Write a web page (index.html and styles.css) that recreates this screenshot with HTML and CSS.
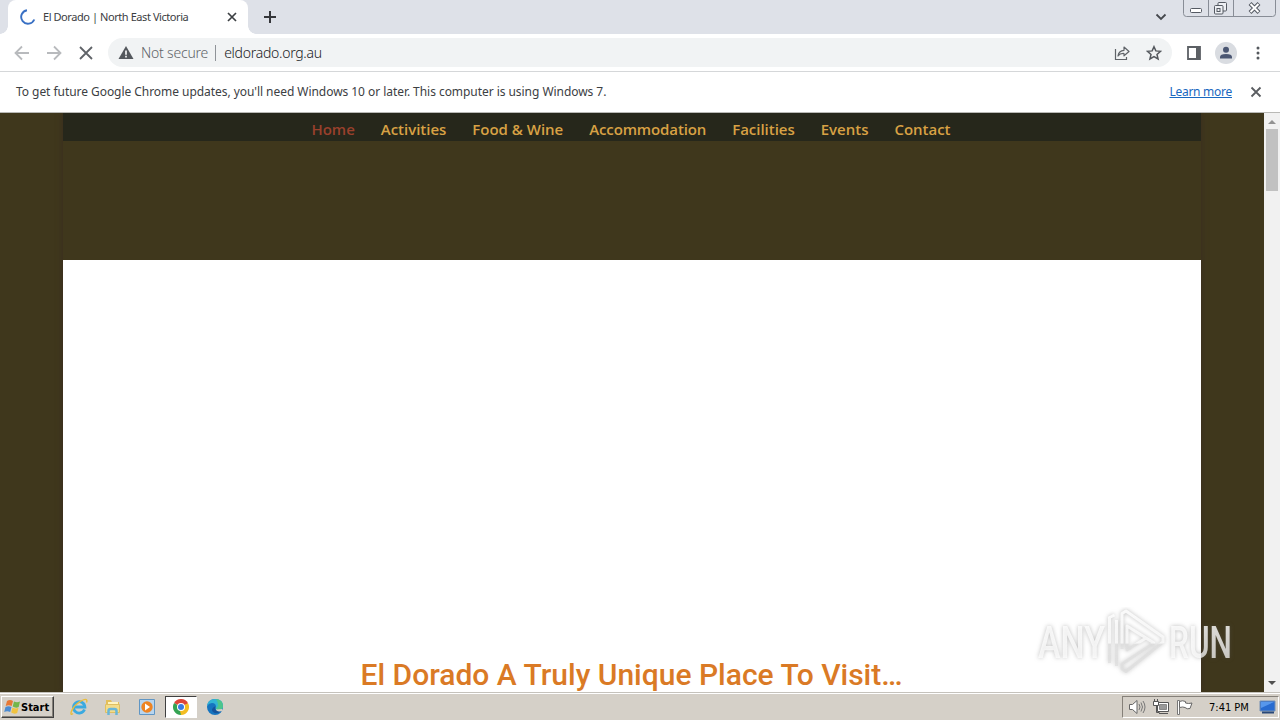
FILE: index.html
```html
<!DOCTYPE html>
<html lang="en">
<head>
<meta charset="utf-8">
<title>El Dorado | North East Victoria</title>
<link rel="stylesheet" href="styles.css">
</head>
<body>
<div class="screen">
  <header class="tabstrip">
    <div class="tab">
      <svg class="spinner" width="16" height="16" viewBox="0 0 16 16"><path d="M7 1.2A6.8 6.8 0 1 0 14.3 10.5" fill="none" stroke="#3970c4" stroke-width="1.9"/></svg>
      <span class="tab-title">El Dorado | North East Victoria</span>
      <svg class="tab-close" width="10" height="10" viewBox="0 0 10 10"><path d="M1 1l8 8M9 1l-8 8" stroke="#3c4043" stroke-width="1.7"/></svg>
    </div>
    <svg class="new-tab" width="12" height="12" viewBox="0 0 12 12"><path d="M6 0v12M0 6h12" stroke="#35363a" stroke-width="2"/></svg>
    <svg class="tab-search" width="12" height="8" viewBox="0 0 12 8"><path d="M1.5 1.5L6 6l4.500-4.500" fill="none" stroke="#45484d" stroke-width="1.8"/></svg>
    <svg class="window-controls" width="94" height="18" viewBox="0 0 94 18">
      <path d="M.5 0v13.500q0 3 3 3h86q3 0 3-3V0M25.500 0v16.500M50.500 0v16.500" fill="none" stroke="#888d96"/>
      <rect x="7.500" y="8.500" width="11" height="4" rx="1" fill="#fff" stroke="#555a63"/>
      <g fill="#eef0f4" stroke="#555a63"><rect x="35" y="2.500" width="8.500" height="8.500" rx="1"/><rect x="31.500" y="5.500" width="8.500" height="8.500" rx="1"/><rect x="34" y="8.500" width="3" height="3"/></g>
      <path d="M67 3.500l9 9M76 3.500l-9 9" stroke="#555a63" stroke-width="4"/><path d="M67.500 4l8 8M75.500 4l-8 8" stroke="#fff" stroke-width="2"/>
    </svg>
  </header>

  <div class="toolbar">
    <svg class="nav-icon" width="16" height="16" viewBox="0 0 16 16"><path d="M15 8H2M8 1.500L1.500 8 8 14.500" fill="none" stroke="#b8babd" stroke-width="1.8"/></svg>
    <svg class="nav-icon" width="16" height="16" viewBox="0 0 16 16"><path d="M1 8h13M8 1.500L14.500 8 8 14.500" fill="none" stroke="#b8babd" stroke-width="1.8"/></svg>
    <svg class="nav-icon" width="16" height="16" viewBox="0 0 16 16"><path d="M2 2l12 12M14 2L2 14" stroke="#5f6368" stroke-width="1.8"/></svg>
    <div class="omnibox">
      <svg class="warning" width="16" height="14" viewBox="0 0 16 14"><path d="M8 0l7.500 13H.5z" fill="#54585d"/><path d="M8 4.500V8.700M8 9.800v1.700" stroke="#fff" stroke-width="1.6"/></svg>
      <span class="security">Not secure</span>
      <span class="divider"></span>
      <span class="url">eldorado.org.au</span>
      <svg class="share" width="16" height="16" viewBox="0 0 16 16"><path d="M1.500 4v10.500h11V12" fill="none" stroke="#5f6368" stroke-width="1.200"/><path d="M4 11q.7-5.500 6-5.700V2L15 6.500l-5 4.300V8.500Q6 8.200 4 11z" fill="none" stroke="#5f6368" stroke-width="1.200" stroke-linejoin="round"/></svg>
      <svg class="star" width="16" height="16" viewBox="0 0 16 16"><path d="M8 1.700l1.850 4.200 4.650.45-3.500 3.050 1.050 4.500L8 11.500l-4.050 2.400L5 9.400 1.500 6.350l4.650-.45z" fill="none" stroke="#54585d" stroke-width="1.500"/></svg>
    </div>
    <svg class="side-panel" width="14" height="14" viewBox="0 0 14 14"><path d="M1 1h12v12H1z" fill="none" stroke="#5c6065" stroke-width="1.800"/><path d="M9 1h4v12H9z" fill="#5c6065"/></svg>
    <svg class="profile" width="22" height="22" viewBox="0 0 22 22"><circle cx="11" cy="11" r="11" fill="#d9dce1"/><circle cx="11" cy="7.700" r="3" fill="#4a5672"/><path d="M5 16.500v-1.500q0-3 6-3t6 3v1.500z" fill="#4a5672"/></svg>
    <svg class="more" width="4" height="14" viewBox="0 0 4 14"><g fill="#54585d"><circle cx="2" cy="2" r="1.500"/><circle cx="2" cy="7" r="1.500"/><circle cx="2" cy="12" r="1.500"/></g></svg>
  </div>

  <div class="infobar">
    <span class="info-text">To get future Google Chrome updates, you'll need Windows 10 or later. This computer is using Windows 7.</span>
    <span class="learn-more">Learn more</span>
    <svg class="info-close" width="12" height="12" viewBox="0 0 12 12"><path d="M1.500 1.500l9 9M10.500 1.500l-9 9" stroke="#5a5d61" stroke-width="1.800"/></svg>
  </div>

  <div class="viewport">
    <main class="site">
      <div class="container">
        <nav class="menu">
          <span class="menu-item active">Home</span>
          <span class="menu-item">Activities</span>
          <span class="menu-item">Food &amp; Wine</span>
          <span class="menu-item">Accommodation</span>
          <span class="menu-item">Facilities</span>
          <span class="menu-item">Events</span>
          <span class="menu-item">Contact</span>
        </nav>
        <div class="banner"></div>
        <section class="content"><h1 class="headline">El Dorado A Truly Unique Place To Visit…</h1></section>
      </div>
    </main>
    <div class="scrollbar">
      <svg width="16" height="15" viewBox="0 0 16 15"><path d="M4 11l4-4 4 4z" fill="#929292"/></svg>
      <div class="thumb"></div>
      <svg class="arrow-down" width="16" height="17" viewBox="0 0 16 17"><path d="M4 6h8l-4 4z" fill="#505050"/></svg>
    </div>
    <svg class="watermark" width="210" height="72" viewBox="0 0 210 72">
      <defs><linearGradient id="fade" gradientUnits="userSpaceOnUse" x1="0" y1="4" x2="0" y2="68"><stop offset="0" stop-color="#fff" stop-opacity=".85"/><stop offset=".5" stop-color="#fff" stop-opacity=".7"/><stop offset=".52" stop-color="#ddd" stop-opacity=".6"/><stop offset="1" stop-color="#ddd" stop-opacity=".65"/></linearGradient></defs>
      <g class="mark" fill="none" stroke="url(#fade)" stroke-width="3.800">
        <path class="play" stroke-width="3" d="M77.500 56V10.500l5-2.500M84.500 59V13M90 42V6.500L94 4l37 26v5L94 64.500l-4-2.500v-5L122 36 95 19v24l19-12"/>
        <g transform="scale(1 1.560)"><text class="mark-text" x="6" y="32.400" textLength="67" lengthAdjust="spacingAndGlyphs">ANY</text><text class="mark-text" x="137" y="32.400" textLength="63" lengthAdjust="spacingAndGlyphs">RUN</text></g>
      </g>
    </svg>
  </div>

  <footer class="taskbar">
    <div class="start">
      <svg width="17" height="16" viewBox="0 0 17 16"><path d="M3 2q3-2 6 0L7.700 7q-3-1.500-6 0z" fill="#e77835"/><path d="M10 2.500q3 1.500 6 0L14.700 8q-3 1.500-6-.5z" fill="#73b64a"/><path d="M1.500 8q3-1.700 6 0L6.200 13q-3-1.700-6 0z" fill="#4b8bd2"/><path d="M8.500 8.500q3 1.700 6 .3L13.200 14q-3 1.500-6-.5z" fill="#f1c340"/></svg>
      <span class="start-label">Start</span>
    </div>
    <div class="launchers">
      <svg class="launcher" width="18" height="18" viewBox="0 0 18 18"><path d="M14.500 11.500a5.700 5.700 0 1 1 .4-2.500H5" fill="none" stroke="#3baae0" stroke-width="2.800"/><path d="M3 15.500C-1 19 1 10 8 5s10-4.500 8.500-.5" fill="none" stroke="#e9bd3e" stroke-width="1.400"/></svg>
      <svg class="launcher" width="18" height="18" viewBox="0 0 18 18"><path d="M2 2h5l1 2h7v9H2z" fill="#e3bf5a"/><path d="M4 4h10v4H4z" fill="#fff4bf"/><path d="M1.500 6.500h14v8h-14z" fill="#f3dc8a" stroke="#dfbf62"/><path d="M4.500 17v-4q0-2 2-2h4q2 0 2 2v4" fill="none" stroke="#69b6d8" stroke-width="2.500"/></svg>
      <svg class="launcher" width="18" height="18" viewBox="0 0 18 18"><path d="M1.500 1.500h15v15h-15z" fill="#b8d5ee" stroke="#6096c4"/><circle cx="9" cy="9" r="5.700" fill="#ee8422"/><path d="M7 5.500v7L12 9z" fill="#fff"/></svg>
      <div class="task-active"><svg width="16" height="16" viewBox="0 0 16 16"><path d="M8 8L1.070 4A8 8 0 0 1 14.930 4z" fill="#de4538"/><path d="M8 8l6.930-4A8 8 0 0 1 8 16z" fill="#f3bd22"/><path d="M8 8v8A8 8 0 0 1 1.070 4z" fill="#35a353"/><path d="M8 4h6.930L8 8z" fill="#de4538"/><path d="M11.500 10L8 16l-1-4z" fill="#f3bd22"/><circle cx="8" cy="8" r="4" fill="#fff"/><circle cx="8" cy="8" r="3" fill="#397ae3"/></svg></div>
      <svg class="launcher" width="18" height="18" viewBox="0 0 18 18"><circle cx="9" cy="9" r="8" fill="#1674bf"/><path d="M1 8Q2 1 9 1q8 0 8 7 0 4-5 4-3 0-2-3 0-4-4-4-3 0-5 3z" fill="#32b4d4"/><path d="M10 1q7 1 7 7 0 4-5 4-2 0-2-1.500 4-3 0-9.500z" fill="#4dc58c"/><path d="M9.500 8q-2 6 5.500 5-4 4-8 1-3-3 2.500-6z" fill="#15539b"/><path d="M9.500 8q-1 2.500 1.500 3.500l5-.5 1 1.500q-4 2-6.500 0-2-2-1-4.500z" fill="#d5d0c8"/></svg>
    </div>
    <div class="tray">
      <svg class="volume" width="18" height="16" viewBox="0 0 18 16"><path d="M1.500 5.500h3L9 1.500v13L4.500 10.500h-3z" fill="#fff" stroke="#666"/><path d="M11 5q2 3 0 6M13 3.500q3 4.500 0 9M15 2q4 6 0 12" fill="none" stroke="#777"/></svg>
      <svg class="network" width="17" height="17" viewBox="0 0 17 17"><path d="M4.500 3.500h11v9h-11z" fill="#fff" stroke="#555"/><path d="M6.500 5.500h7v5h-7z" fill="#999" stroke="#888"/><path d="M6 14.500h9" stroke="#555"/><path d="M.5 2.500h5v4h-5z" fill="#fff" stroke="#555"/><path d="M1.500 0v3M4.500 0v3M3.500 6.500v7h3" fill="none" stroke="#555"/></svg>
      <svg class="flag" width="17" height="17" viewBox="0 0 17 17"><path d="M.5 1.500h2v14h-2z" fill="#fff" stroke="#777"/><path d="M2.500 2.500q3-1.500 6 0v1.500q3 1 6.500 0L13 9.500q-3 1-5-1-2-1-5.500 0z" fill="#fff" stroke="#666"/></svg>
      <span class="clock">7:41 PM</span>
      <svg class="desktop" width="17" height="14" viewBox="0 0 17 14"><path d="M1 1h15v10H1z" fill="#286bd0" stroke="#7591b5"/><path d="M2 2h13L2 8z" fill="#5797ec"/><path d="M3 12.500h12" stroke="#294878" stroke-width="2"/></svg>
    </div>
  </footer>
</div>
</body>
</html>
```

FILE: styles.css
```css
* { box-sizing: border-box; }
body { margin: 0; overflow: hidden; font-family: "Noto Sans", sans-serif; }
svg { display: block; flex: none; }
span { white-space: nowrap; }
.screen { width: 1280px; height: 720px; display: flex; flex-direction: column; background: #fff; }

.tabstrip { height: 34px; flex: none; display: flex; background: #dee1e8; padding-left: 8px; }
.tab { width: 240px; height: 34px; display: flex; align-items: center; padding: 0 11px 0 12px; background: #fff; border-radius: 8px 8px 0 0; position: relative; }
.tab::before, .tab::after { content: ""; position: absolute; bottom: 0; width: 8px; height: 8px; }
.tab::before { left: -8px; background: radial-gradient(circle at 0 0, #dee1e8 7.5px, #fff 8px); }
.tab::after { right: -8px; background: radial-gradient(circle at 100% 0, #dee1e8 7.5px, #fff 8px); }
.tab-title { margin-left: 7px; padding-bottom: 2px; font-size: 11px; letter-spacing: -0.43px; color: #3c4043; }
.tab-close { margin-left: auto; }
.new-tab { margin: 11px 0 0 16px; }
.tab-search { margin: 13px 16px 0 auto; }
.window-controls { margin-right: 3px; }

.toolbar { height: 38px; flex: none; display: flex; align-items: center; padding: 0 20px 0 14px; border-bottom: 1px solid #d5d7d9; }
.nav-icon { margin-right: 16px; }
.omnibox { width: 1064px; height: 29px; margin-left: -2px; display: flex; align-items: center; padding: 0 10px; border-radius: 15px; background: #f1f3f4; }
.security { margin-left: 7px; font-size: 14px; font-weight: 300; letter-spacing: -0.2px; color: #5f6368; }
.divider { width: 1px; height: 16px; margin: 0 8px 0 7px; background: #8f9398; }
.url { font-size: 14px; font-weight: 300; letter-spacing: -0.27px; color: #202124; }
.share { margin-left: auto; }
.star { margin-left: 16px; }
.side-panel { margin-left: 15px; }
.profile { margin-left: 14px; }
.more { margin-left: auto; }

.infobar { height: 41px; flex: none; display: flex; align-items: center; padding: 0 18px 2px 16px; border-bottom: 1px solid #b9b9b6; font-size: 12px; letter-spacing: -0.05px; color: #3c4043; }
.learn-more { margin-left: auto; letter-spacing: -0.27px; color: #1967c0; text-decoration: underline; }
.info-close { margin: 2px 0 0 18px; }

.viewport { flex: 1; min-height: 0; display: flex; position: relative; overflow: hidden; }
.site { flex: 1; display: flex; padding: 0 63px; background: #3f371c; }
.container { flex: 1; display: flex; flex-direction: column; box-shadow: 0 0 6px #3a2d20; }
.menu { height: 28px; display: flex; justify-content: center; gap: 26px; padding: 6px 2px 0 0; background: #26271b; font: 600 15px/21px "Open Sans", sans-serif; letter-spacing: -0.02px; color: #d8a144; }
.menu-item:nth-child(4) { letter-spacing: -0.12px; }
.menu-item.active { color: #99402c; }
.banner { height: 119px; flex: none; background: #3f371c; }
.content { flex: 1; display: flex; align-items: flex-end; justify-content: center; background: #fff; }
.headline { margin: 0 1px -1px 0; font: 500 30px/36px Roboto, sans-serif; color: #da7a25; white-space: nowrap; }
.scrollbar { width: 16px; display: flex; flex-direction: column; align-items: center; background: #f1f1f1; }
.thumb { width: 12px; height: 62px; margin-top: 1px; background: #c1c1c1; }
.arrow-down { margin-top: auto; }
.watermark { position: absolute; left: 1032px; top: 494px; }
.mark { filter: drop-shadow(0 0 2px rgba(90, 90, 90, .5)); }
.mark-text { font: 500 29px Roboto, sans-serif; fill: url(#fade); stroke: none; }
.play { stroke-linejoin: round; }

.taskbar { height: 28px; flex: none; display: flex; padding: 3px 1px 2px; background: #d5d0c8; border-top: 1px solid #c5c2bc; box-shadow: inset 0 1px #fff; }
.start { width: 53px; height: 22px; display: flex; align-items: center; padding-left: 2px; border: 1px solid; border-color: #fff #404040 #404040 #fff; box-shadow: inset -1px -1px #858079; }
.start-label { font: bold 11px "DejaVu Sans Condensed", "DejaVu Sans", sans-serif; color: #000; }
.launchers { display: flex; align-items: center; height: 22px; margin-left: 16px; gap: 16px; }
.task-active { width: 32px; height: 22px; margin: 0 -7px; display: flex; align-items: center; justify-content: center; background: #fff; border: 1px solid; border-color: #404040 #fff #fff #404040; }
.tray { width: 157px; height: 22px; margin-left: auto; display: flex; align-items: center; padding-left: 5px; border: 1px solid; border-color: #858079 #fff #fff #858079; }
.network { margin-left: 7px; }
.flag { margin-left: 7px; }
.clock { margin-left: 15px; font: 11px "DejaVu Sans Condensed", "DejaVu Sans", sans-serif; color: #000; }
.desktop { margin-left: auto; margin-right: 2px; }
```
